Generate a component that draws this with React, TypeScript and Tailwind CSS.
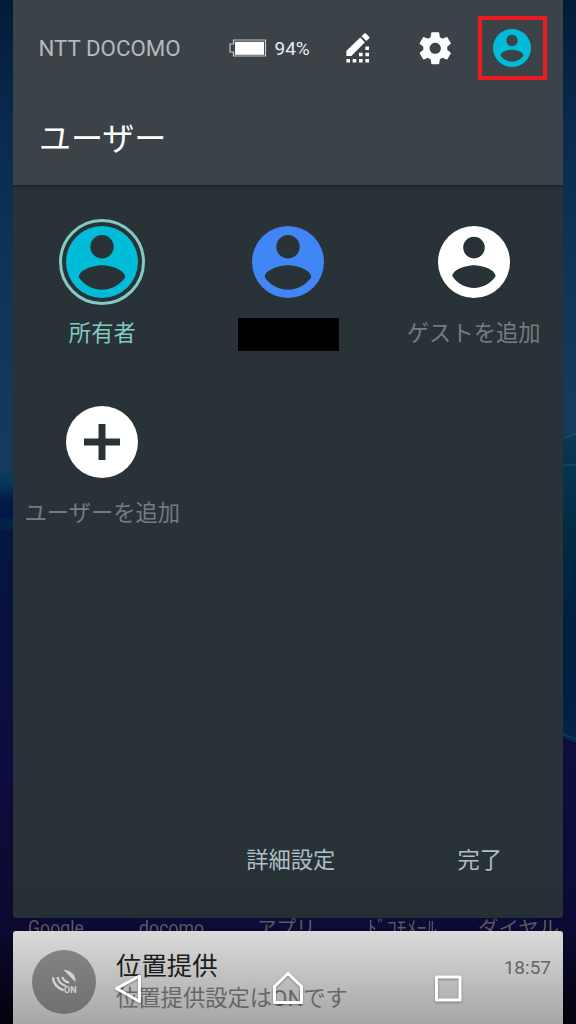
/**
 * Quick settings user switcher, shown over the home screen
 */

import React from 'react';
import clsx from 'clsx';

const JP_FONT = "font-['Roboto','Noto_Sans_CJK_JP',sans-serif]";

const launcherLabels = [
  { text: 'Google', className: 'left-[28px] scale-x-[0.91]' },
  { text: 'docomo', className: 'left-[139px] scale-x-[0.91]' },
  { text: 'アプリ', className: 'left-[257px]' },
  { text: 'ﾄﾞｺﾓﾒｰﾙ', className: 'left-[367px] scale-x-[1.02]' },
  { text: 'ダイヤル', className: 'left-[478px] scale-x-[1.05]' },
];

interface IconProps {
  className?: string;
}

const CIRCLE = 'M12 2a10 10 0 1 0 0 20a10 10 0 1 0 0-20z';
const PERSON =
  'M12 5c1.66 0 3 1.34 3 3s-1.34 3-3 3-3-1.34-3-3 1.34-3 3-3zM12 19.2c-2.5 0-4.71-1.28-6-3.22.03-1.99 4-3.08 6-3.08 1.99 0 5.97 1.09 6 3.08-1.29 1.94-3.5 3.22-6 3.22z';
const PERSON_LARGE =
  'M12 4.5a3.25 3.25 0 1 1 0 6.5a3.25 3.25 0 1 1 0-6.5zM12 19.7c-2.7 0-5.08-1.4-6.45-3.48.03-2.14 4.28-3.32 6.45-3.32 2.15 0 6.42 1.18 6.45 3.32-1.38 2.08-3.76 3.48-6.45 3.48z';

const AccountIcon: React.FC<IconProps & { large?: boolean }> = ({ className, large }) => (
  <svg viewBox="2 2 20 20" className={className} fill="currentColor" fillRule="evenodd">
    <path d={CIRCLE + (large ? PERSON_LARGE : PERSON)} />
  </svg>
);

const BatteryIcon: React.FC<IconProps> = ({ className }) => (
  <svg viewBox="0 0 38 18" className={className} fill="none">
    <path d="M4.500 1h32v16h-32v-4h-3.500v-8h3.500z" stroke="#c7cacc" strokeWidth="1.2" />
    <rect x="6" y="2.800" width="29" height="13" fill="#fff" />
  </svg>
);

const EditTilesIcon: React.FC<IconProps> = ({ className }) => (
  <svg viewBox="0 0 24 30" className={className} fill="#fff">
    <path d="M14.200 4.600l4.700 4.700L5.400 23H.4v-5.200z" />
    <path d="M15.500 3.300L18.300.5q.8-.7 1.600 0l3.300 3.200q.7.800 0 1.500L20.300 8z" />
    <path d="M.4 26h3.600v3.500H.4zM6.700 26h3.600v3.500H6.700zM13 26h3.600v3.500H13zM19.400 26h3.600v3.500h-3.600zM13 19.800h3.600v3.500H13zM19.400 19.800h3.600v3.500h-3.600zM19.400 13.500h3.600v3.500h-3.600z" />
  </svg>
);

const GearIcon: React.FC<IconProps> = ({ className }) => (
  <svg viewBox="0 0 24 24" className={className} fill="#fff">
    <path d="M19.43 12.98c.04-.32.07-.64.07-.98s-.03-.66-.07-.98l2.11-1.65c.19-.15.24-.42.12-.64l-2-3.46c-.12-.22-.39-.3-.61-.22l-2.49 1c-.52-.4-1.08-.73-1.69-.98l-.38-2.65C14.46 2.18 14.25 2 14 2h-4c-.25 0-.46.18-.49.42l-.38 2.65c-.61.25-1.17.59-1.69.98l-2.49-1c-.23-.09-.49 0-.61.22l-2 3.46c-.13.22-.07.49.12.64l2.11 1.65c-.04.32-.07.65-.07.98s.03.66.07.98l-2.11 1.65c-.19.15-.24.42-.12.64l2 3.46c.12.22.39.3.61.22l2.49-1c.52.4 1.08.73 1.69.98l.38 2.65c.03.24.24.42.49.42h4c.25 0 .46-.18.49-.42l.38-2.65c.61-.25 1.17-.59 1.69-.98l2.49 1c.23.09.49 0 .61-.22l2-3.46c.12-.22.07-.49-.12-.64l-2.11-1.65zM12 15.5c-1.93 0-3.5-1.57-3.500-3.500s1.570-3.500 3.500-3.500 3.500 1.570 3.500 3.500-1.570 3.500-3.500 3.500z" />
  </svg>
);

const SatelliteIcon: React.FC<IconProps> = ({ className }) => (
  <svg viewBox="0 0 102 102" className={className} fill="none" stroke="#d2d2d2" strokeWidth="7">
    <path d="M46 20C66 20 86 36 82 57Z" fill="#d2d2d2" stroke="none" />
    <path d="M15 43Q16 70 47 82M29 42Q31 62 54 69M43 42Q46 54 63 59" />
  </svg>
);

const Wallpaper: React.FC = () => (
  <div className="absolute inset-0 flex justify-between bg-[#0c0b38]">
    <div className="w-10 bg-[linear-gradient(180deg,#031b38_0px,#0a2a50_130px,#0f3257_250px,#15395a_400px,#163a5b_470px,#04385a_484px,#021b45_500px,#03164a_517px,#03224a_520px,#03224a_528px,#05173f_532px,#09113c_640px,#0e0b40_780px,#100a33_850px,#0c0a32_925px,#05030f_1010px)]" />
    <div className="w-[300px] bg-[#0c0c38]" />
    <div className="w-10 bg-[linear-gradient(180deg,#031b38_0px,#0a2a50_130px,#0f3257_250px,#16395c_400px,#173b5e_432px,#083550_442px,#06344f_470px,#022a43_530px,#00213f_620px,#002044_700px,#022346_730px,#0d0d3e_742px,#0c0c3c_860px,#0b0a34_930px,#05030f_1010px)]">
      <svg viewBox="0 0 40 400" className="mt-[400px] h-[400px] w-10" fill="none">
        <path d="M24 40Q32 36 40 34M24 65H40" stroke="#17566b" />
        <path d="M24 329L40 341V331L24 327Z" fill="#022547" />
        <path d="M24 331Q32 337 40 339M24 333Q32 338 40 342" stroke="#124565" />
      </svg>
    </div>
  </div>
);

interface UserTileProps {
  label?: string;
  selected?: boolean;
  children: React.ReactNode;
}

const UserTile: React.FC<UserTileProps> = ({ label, selected, children }) => (
  <div className="flex flex-col items-center">
    <div
      className={clsx(
        'flex size-[86px] items-center justify-center rounded-full',
        selected && 'border-[3px] border-[#80cbc4]'
      )}
    >
      {children}
    </div>
    {label ? (
      <span
        className={clsx(
          'mt-3 whitespace-nowrap text-[22.300px] leading-[32px]',
          selected ? 'text-[#80cbc4]' : 'text-[#757c80]'
        )}
      >
        {label}
      </span>
    ) : (
      <div className="mt-[13px] h-[33px] w-[101px] bg-black" />
    )}
  </div>
);

const Header: React.FC = () => (
  <header className="h-[185px] bg-[#3b4349] shadow-[0_1px_4px_rgba(0,0,0,0.45)]">
    <div className="flex h-24 items-center pl-[25.500px]">
      <span className="w-[190px] pt-[2px] text-[22.300px] text-[#b5b9bb]">NTT DOCOMO</span>
      <BatteryIcon className="h-[18px] w-[38px]" />
      <span className="ml-2 w-[71px] pt-[2px] text-[19px] text-[#eceded]">94%</span>
      <EditTilesIcon className="h-[30px] w-6" />
      <GearIcon className="ml-[46px] size-[38.500px]" />
      <div className="ml-[23.500px] flex h-[64px] w-[69px] items-center justify-center border-[4px] border-[#ed1c24]">
        <AccountIcon className="size-[38px] text-[#00bcd9]" />
      </div>
    </div>
    <h1 className="pt-[19px] pl-[26px] text-[32px] leading-[48px] text-white">ユーザー</h1>
  </header>
);

const UserPanel: React.FC = () => (
  <section className="mx-[13px] flex h-[918px] flex-col overflow-hidden rounded-b-[3px] bg-[linear-gradient(180deg,#283237_860px,#242e33_918px)]">
    <Header />
    <div className="mt-[34px] grid grid-cols-[repeat(3,185.700px)] justify-center gap-y-12">
      <UserTile label="所有者" selected>
        <AccountIcon large className="size-[72px] text-[#00bcd9]" />
      </UserTile>
      <UserTile>
        <AccountIcon large className="size-[72px] text-[#4285f4]" />
      </UserTile>
      <UserTile label="ゲストを追加">
        <AccountIcon className="size-[72px] text-white" />
      </UserTile>
      <UserTile label="ユーザーを追加">
        <svg viewBox="0 0 72 72" className="size-[72px]" fill="#fff" fillRule="evenodd">
          <path d="M36 0a36 36 0 1 0 0 72a36 36 0 1 0 0-72zM32.500 18h7v14.500H54v7H39.500V54h-7V39.500H18v-7h14.500z" />
        </svg>
      </UserTile>
    </div>
    <div className="mt-auto mb-[42px] flex justify-end pr-[61px] text-[22.300px] leading-[32px] text-[#b0bec5]">
      <button className="mr-[122px]">詳細設定</button>
      <button>完了</button>
    </div>
  </section>
);

const LocationNotification: React.FC = () => (
  <section className="mx-[13px] flex h-[93px] rounded-t-[3px] bg-[linear-gradient(180deg,#dadada,#a6a6a6)] pl-[19px] shadow-[0_0_2px_rgba(0,0,0,0.6)]">
    <div className="relative mt-[19px] size-16 rounded-full bg-[linear-gradient(180deg,#838383,#707070)]">
      <SatelliteIcon className="absolute top-[13px] left-4 size-[34px]" />
      <span className="absolute top-[34px] left-[32px] font-['Roboto',sans-serif] text-[9px] leading-[13px] font-bold text-[#d2d2d2]">
        ON
      </span>
    </div>
    <div className="ml-5 flex flex-1 flex-col pt-[17px] whitespace-nowrap">
      <span className="text-[25.400px] leading-[36px] text-[#1c1c1c]">位置提供</span>
      <span className="text-[22.300px] leading-[28px] text-[#666]">位置提供設定はONです</span>
    </div>
    <span className="mt-[26px] mr-[12px] text-[19px] leading-[22px] text-[#666]">18:57</span>
  </section>
);

const NavigationBar: React.FC = () => (
  <nav className="absolute inset-x-0 bottom-0 h-[72px]">
    <svg viewBox="0 0 576 72" className="h-[72px] w-[576px] drop-shadow-[0_1px_1px_rgba(0,0,0,0.35)]" fill="none" stroke="#fff" strokeWidth="3" strokeLinejoin="round">
      <path d="M116.500 36.500L139.500 24V49.500Z" />
      <path d="M274.500 50.500V34.500L288 21.500L301.500 34.500V50.500Z" />
      <path d="M436.500 25H460V48H436.500Z" />
    </svg>
  </nav>
);

export default function App() {
  return (
    <div className={clsx('relative h-[1024px] w-[576px] overflow-hidden', JP_FONT)}>
      <Wallpaper />
      <div className="relative flex h-full flex-col">
        <UserPanel />
        {/* Home screen labels showing through between the two cards */}
        <div className="relative h-[13px] overflow-hidden">
          {launcherLabels.map((label) => (
            <span
              key={label.text}
              className={clsx(
                'absolute -top-[3px] origin-left text-[19.500px] leading-[28px] whitespace-nowrap text-[#5b5a5c]',
                label.className
              )}
            >
              {label.text}
            </span>
          ))}
        </div>
        <LocationNotification />
      </div>
      <NavigationBar />
    </div>
  );
}
